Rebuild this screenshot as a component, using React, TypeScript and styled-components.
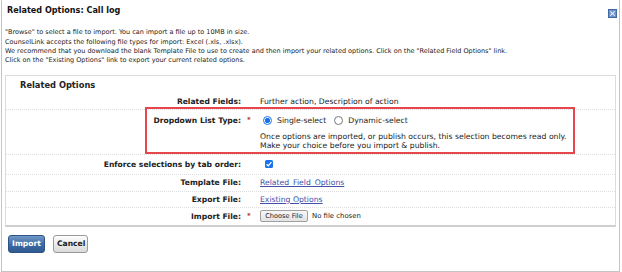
import React from "react";
import styled, { createGlobalStyle } from "styled-components";

const Global = createGlobalStyle`
  html, body { margin: 0; padding: 0; background: #fff; }
  body { font-family: "DejaVu Sans", Verdana, sans-serif; color: #222; }
`;

const Window = styled.div`
  box-sizing: border-box;
  margin-left: 1px;
  width: 619px;
  height: 272px;
  border-left: 1px solid #c4c4c4;
  border-right: 1px solid #c4c4c4;
  border-bottom: 1px solid #c4c4c4;
  padding: 0 3px;
  display: flex;
  flex-direction: column;
`;

const TitleBar = styled.div`
  height: 20px;
  display: flex;
  justify-content: space-between;
  align-items: flex-start;
`;

const Title = styled.h1`
  margin: 0;
  padding-left: 2px;
  font-family: "DejaVu Sans Condensed", "DejaVu Sans", sans-serif;
  font-size: 9px;
  font-weight: 700;
  line-height: 20px;
  color: #111;
`;

const CloseButton = styled.span`
  display: block;
  margin-top: 3px;
  margin-right: -1px;
  width: 9px;
  height: 9px;
`;

const Intro = styled.div`
  margin-top: 8.4px;
  font-size: 6.5px;
  line-height: 9.25px;
  color: #222;
  white-space: nowrap;
`;

const Panel = styled.section`
  margin-top: 9.6px;
  border: 1px solid #dcdcdc;
  border-bottom: 2px solid #cfcfcf;
`;

const PanelHeading = styled.h2`
  margin: 0;
  height: 18px;
  line-height: 18px;
  padding-left: 14px;
  font-size: 8.3px;
  font-weight: 700;
  color: #222;
`;

const Row = styled.div<{ h: number; top?: number; last?: boolean }>`
  position: relative;
  display: grid;
  grid-template-columns: 235px 19px 1fr;
  align-items: ${(p) => (p.top !== undefined ? "start" : "center")};
  height: ${(p) => p.h}px;
  padding-top: ${(p) => p.top ?? 0}px;
  box-sizing: border-box;
  border-bottom: ${(p) => (p.last ? "none" : "1px dotted #dedede")};
  font-size: 7.7px;
  line-height: 9px;
`;

const Label = styled.div`
  text-align: right;
  font-size: 7.6px;
  font-weight: 700;
  color: #222;
  white-space: nowrap;
`;

const Required = styled.div`
  color: #a8323a;
  font-weight: 700;
  padding-left: 6px;
  font-size: 7px;
`;

const Value = styled.div`
  color: #222;
  white-space: nowrap;
`;

const RadioGroup = styled.div`
  display: flex;
  align-items: center;
  height: 9px;
`;

const RadioDot = styled.span<{ checked?: boolean }>`
  display: inline-block;
  box-sizing: border-box;
  width: 9px;
  height: 9px;
  border-radius: 50%;
  margin: 0 5px 0 3px;
  border: 1px solid ${(p) => (p.checked ? "#1a73e8" : "#767676")};
  background: ${(p) =>
    p.checked ? "radial-gradient(circle, #1a73e8 0 2.4px, #fff 2.9px)" : "#fff"};
`;

const RadioText = styled.span`
  margin-right: 5px;
`;

const Note = styled.div`
  margin-top: 8.5px;
  line-height: 8.5px;
`;

const Highlight = styled.div`
  position: absolute;
  left: 139px;
  top: -3px;
  width: 430px;
  height: 47px;
  box-sizing: border-box;
  border: 2px solid #e5474d;
  pointer-events: none;
`;

const CheckBox = styled.span`
  display: block;
  margin-left: 5px;
  width: 8px;
  height: 8px;
  border-radius: 1.5px;
  background: #1a73e8;
  position: relative;
  svg { position: absolute; left: 0; top: 0; }
`;

const Link = styled.a`
  color: #4450a8;
  text-decoration: underline;
  cursor: pointer;
`;

const FileRow = styled.div`
  display: flex;
  align-items: center;
  gap: 4px;
  font-size: 6.9px;
`;

const FileButton = styled.button`
  box-sizing: border-box;
  height: 12px;
  width: 48px;
  padding: 0;
  border: 1px solid #a0a0a0;
  border-radius: 2px;
  background: linear-gradient(#f7f7f7, #e3e3e3);
  font-family: "DejaVu Sans", sans-serif;
  font-size: 6.6px;
  line-height: 10px;
  color: #222;
`;

const Actions = styled.div`
  display: flex;
  gap: 8px;
  margin-top: 8px;
  padding-left: 3px;
`;

const ActionButton = styled.button<{ primary?: boolean }>`
  box-sizing: border-box;
  height: 18px;
  padding: 0 3px;
  border-radius: 3px;
  font-family: "DejaVu Sans", sans-serif;
  font-size: 7.6px;
  font-weight: 700;
  ${(p) =>
    p.primary
      ? `width: 37px; color: #fff; border: 1px solid #2d5286;
         background: linear-gradient(#6f97c6, #3d6aa3 55%, #2f5a92);`
      : `width: 35px; color: #1a1a1a; border: 1px solid #9a9a9a;
         background: linear-gradient(#fdfdfd, #dadada);`}
`;

export default function App() {
  return (
    <>
      <Global />
      <Window>
        <TitleBar>
          <Title>Related Options: Call log</Title>
          <CloseButton aria-label="Close">
            <svg width="9" height="9" viewBox="0 0 9 9">
              <rect x="0.5" y="0.5" width="8" height="8" fill="#6e93cb" stroke="#4169a6" />
              <path d="M2.3 2.3 L6.7 6.7 M6.7 2.3 L2.3 6.7" stroke="#e4ecf8" strokeWidth="1.1" />
            </svg>
          </CloseButton>
        </TitleBar>
        <Intro>
          "Browse" to select a file to import. You can import a file up to 10MB in size.
          <br />
          CounselLink accepts the following file types for import: Excel (.xls, .xlsx).
          <br />
          We recommend that you download the blank Template File to use to create and then import your related options. Click on the "Related Field Options" link.
          <br />
          Click on the "Existing Options" link to export your current related options.
        </Intro>
        <Panel>
          <PanelHeading>Related Options</PanelHeading>
          <Row h={16}>
            <Label>Related Fields:</Label>
            <div />
            <Value>Further action, Description of action</Value>
          </Row>
          <Row h={45} top={6}>
            <Label>Dropdown List Type:</Label>
            <Required>*</Required>
            <Value>
              <RadioGroup>
                <RadioDot checked />
                <RadioText>Single-select</RadioText>
                <RadioDot />
                <RadioText>Dynamic-select</RadioText>
              </RadioGroup>
              <Note>
                Once options are imported, or publish occurs, this selection becomes read only.
                <br />
                Make your choice before you import &amp; publish.
              </Note>
            </Value>
            <Highlight />
          </Row>
          <Row h={20}>
            <Label>Enforce selections by tab order:</Label>
            <div />
            <Value>
              <CheckBox>
                <svg width="8" height="8" viewBox="0 0 8 8">
                  <path d="M1.6 4.2 L3.3 5.8 L6.4 2.2" fill="none" stroke="#fff" strokeWidth="1.3" />
                </svg>
              </CheckBox>
            </Value>
          </Row>
          <Row h={17}>
            <Label>Template File:</Label>
            <div />
            <Value>
              <Link>Related_Field_Options</Link>
            </Value>
          </Row>
          <Row h={16}>
            <Label>Export File:</Label>
            <div />
            <Value>
              <Link>Existing Options</Link>
            </Value>
          </Row>
          <Row h={17} last>
            <Label>Import File:</Label>
            <Required>*</Required>
            <Value>
              <FileRow>
                <FileButton>Choose File</FileButton>
                <span>No file chosen</span>
              </FileRow>
            </Value>
          </Row>
        </Panel>
        <Actions>
          <ActionButton primary>Import</ActionButton>
          <ActionButton>Cancel</ActionButton>
        </Actions>
      </Window>
    </>
  );
}
